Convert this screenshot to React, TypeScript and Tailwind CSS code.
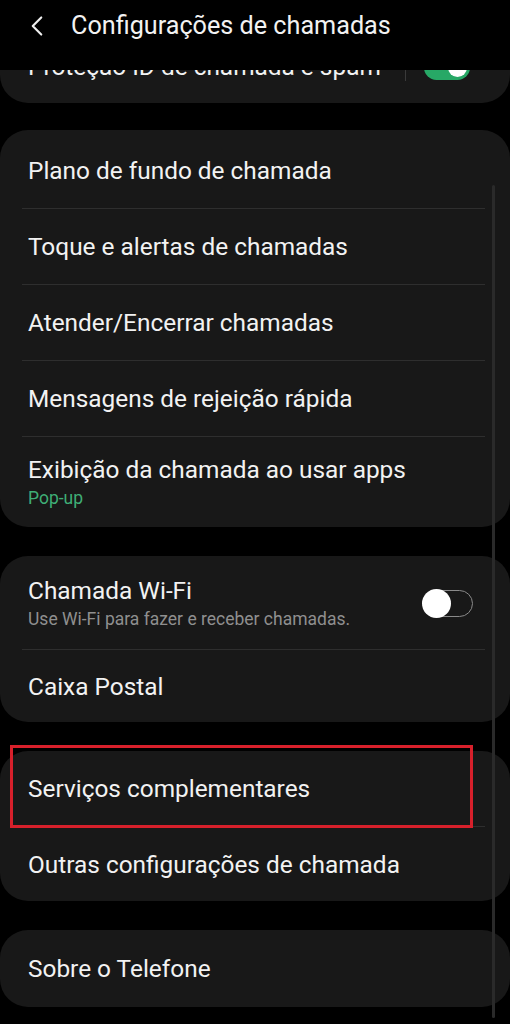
import { ChevronLeft } from 'lucide-react';

type Row = { title: string; h: string; sub?: string; subTone?: 'green' | 'gray'; toggle?: boolean };

const FONT = { fontFamily: 'Roboto, "Noto Sans", Arial, sans-serif' };

// row heights are measured off the device; they are not all equal
const GROUPS: Row[][] = [
  [
    { title: 'Plano de fundo de chamada', h: 'h-[78px] pt-[3px]' },
    { title: 'Toque e alertas de chamadas', h: 'h-[75px] pt-[1px]' },
    { title: 'Atender/Encerrar chamadas', h: 'h-[75px] pt-[1px]' },
    { title: 'Mensagens de rejeição rápida', h: 'h-[75px] pt-[1px]' },
    { title: 'Exibição da chamada ao usar apps', h: 'h-[90px] pt-[2px]', sub: 'Pop-up', subTone: 'green' },
  ],
  [
    {
      title: 'Chamada Wi-Fi',
      h: 'h-[93px] pt-[2px]',
      sub: 'Use Wi-Fi para fazer e receber chamadas.',
      subTone: 'gray',
      toggle: true,
    },
    { title: 'Caixa Postal', h: 'h-[72px] pt-[1px]' },
  ],
  [
    { title: 'Serviços complementares', h: 'h-[75px] pt-[1px]' },
    { title: 'Outras configurações de chamada', h: 'h-[74px] pt-[1px]' },
  ],
  [{ title: 'Sobre o Telefone', h: 'h-[77px] pt-[1px]' }],
];

function Toggle({ on }: { on: boolean }) {
  if (on) {
    return (
      <div className="w-[46px] h-[25px] rounded-full bg-[#27a866] flex items-center justify-end px-[3px]">
        <div className="w-[19px] h-[19px] rounded-full bg-white" />
      </div>
    );
  }
  return (
    <div className="w-[48px] h-[27px] rounded-full border-[1.5px] border-[#8a8a8a] flex items-center">
      <div className="-ml-[4px] w-[29px] h-[29px] rounded-full bg-white" />
    </div>
  );
}

function SettingRow({ row, last }: { row: Row; last: boolean }) {
  return (
    <div>
      <div className={`flex items-center pl-[28px] pr-[37px] ${row.h}`}>
        <div className="flex-1 min-w-0">
          <p className="text-[24.4px] leading-[30px] text-[#f2f2f2]">{row.title}</p>
          {row.sub && (
            <p
              className={`text-[17.5px] leading-[26px] ${
                row.subTone === 'green' ? 'text-[#3fae76]' : 'text-[#8f8f8f]'
              }`}
            >
              {row.sub}
            </p>
          )}
        </div>
        {row.toggle && <Toggle on={false} />}
      </div>
      {!last && <div className="ml-[22px] mr-[25px] h-px bg-[#2e2e2e]" />}
    </div>
  );
}

export default function App() {
  return (
    <div className="relative w-[510px] h-[1024px] bg-black overflow-hidden flex flex-col" style={FONT}>
      {/* header */}
      <div className="relative z-10 h-[70px] shrink-0 bg-black flex items-start pt-[9px]">
        <ChevronLeft size={34} strokeWidth={1.5} className="ml-[20px] text-[#eeeeee]" />
        <span className="ml-[17px] text-[25.2px] leading-[34px] text-[#f2f2f2]">Configurações de chamadas</span>
      </div>

      <div className="flex-1 flex flex-col">
        {/* card scrolled under the header */}
        <div className="-mt-[38px] h-[71px] rounded-[28px] bg-[#181818] flex items-center pl-[28px] pr-[40px]">
          <p className="flex-1 text-[24.4px] text-[#f2f2f2]">Proteção ID de chamada e spam</p>
          <div className="w-px h-[26px] bg-[#3a3a3a] mr-[18px]" />
          <Toggle on />
        </div>

        <div className="mt-[27px] flex flex-col gap-[29px]">
          {GROUPS.map((rows, gi) => (
            <div key={gi} className="relative rounded-[28px] bg-[#181818]">
              {rows.map((r, i) => (
                <SettingRow key={r.title} row={r} last={i === rows.length - 1} />
              ))}
              {gi === 2 && (
                <div className="absolute -top-[6px] left-[10px] w-[463px] h-[83px] border-[3px] border-[#d7202b]" />
              )}
            </div>
          ))}
        </div>
      </div>

      {/* scrollbar */}
      <div className="absolute left-[492px] top-[185px] w-[3px] h-[833px] rounded-full bg-[#2a2a2a]" />
    </div>
  );
}
